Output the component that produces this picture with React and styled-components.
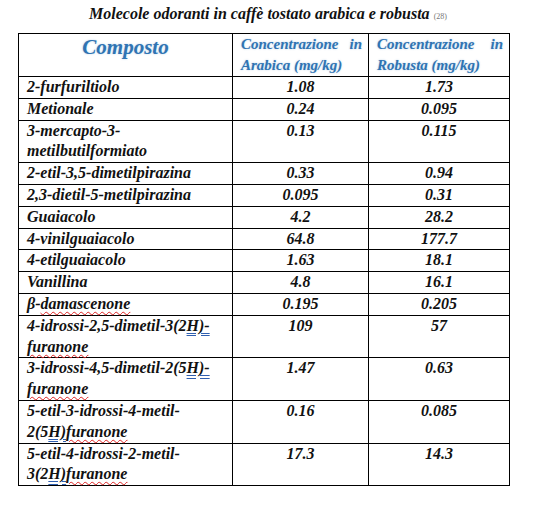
import React from "react"
import styled, { createGlobalStyle } from "styled-components"

const GlobalStyle = createGlobalStyle`
  body {
    margin: 0;
    background: #fff;
    font-family: "Liberation Serif", "Times New Roman", serif;
  }
`

const Page = styled.div`
  width: 536px;
  height: 510px;
  padding-top: 4px;
  box-sizing: border-box;
`

const Title = styled.h1`
  margin: 0 0 10px;
  height: 19px;
  text-align: center;
  font-family: "Liberation Serif", "Times New Roman", serif;
  font-size: 16px;
  line-height: 19px;
  font-weight: bold;
  font-style: italic;
  color: #111;
`

const Ref = styled.span`
  font-size: 8px;
  font-weight: normal;
  font-style: normal;
  color: #777;
  margin-left: 4px;
`

const Table = styled.table`
  margin-left: 18px;
  width: 491px;
  border-collapse: collapse;
  table-layout: fixed;
`

const HeadCell = styled.th`
  border: 1px solid #000;
  padding: ${props => (props.$main ? "0" : "0 6px 0 8px")};
  vertical-align: top;
  text-align: ${props => (props.$main ? "center" : "justify")};
  text-align-last: ${props => (props.$main ? "center" : "left")};
  color: #2f74b3;
  text-shadow: 0 0 2px rgba(47, 116, 179, 0.35);
  font-family: "Liberation Serif", "Times New Roman", serif;
  font-style: italic;
  font-weight: bold;
  font-size: ${props => (props.$main ? "21px" : "15px")};
  line-height: ${props => (props.$main ? "26px" : "21px")};
  height: 42px;
`

const Cell = styled.td`
  border: 1px solid #000;
  padding: ${props => (props.$num ? "0" : "0 4px 0 8px")};
  vertical-align: top;
  text-align: ${props => (props.$num ? "center" : "left")};
  font-family: "Liberation Serif", "Times New Roman", serif;
  font-style: italic;
  font-weight: bold;
  font-size: 16px;
  line-height: 20.8px;
  color: #111;
`

const Spell = styled.span`
  text-decoration: underline wavy #d22;
  text-decoration-thickness: 1px;
  text-underline-offset: 2px;
`

const Grammar = styled.span`
  text-decoration: underline double #2f5fb0;
  text-underline-offset: 2px;
`

const rows = [
  ["2-furfuriltiolo", "1.08", "1.73"],
  ["Metionale", "0.24", "0.095"],
  [<>3-mercapto-3-<br />metilbutilformiato</>, "0.13", "0.115"],
  ["2-etil-3,5-dimetilpirazina", "0.33", "0.94"],
  ["2,3-dietil-5-metilpirazina", "0.095", "0.31"],
  ["Guaiacolo", "4.2", "28.2"],
  ["4-vinilguaiacolo", "64.8", "177.7"],
  ["4-etilguaiacolo", "1.63", "18.1"],
  ["Vanillina", "4.8", "16.1"],
  [<>β-<Spell>damascenone</Spell></>, "0.195", "0.205"],
  [
    <>4-idrossi-2,5-dimetil-3(2<Grammar>H)-</Grammar><br /><Spell>furanone</Spell></>,
    "109",
    "57",
  ],
  [
    <>3-idrossi-4,5-dimetil-2(5<Grammar>H)-</Grammar><br /><Spell>furanone</Spell></>,
    "1.47",
    "0.63",
  ],
  [
    <>5-etil-3-idrossi-4-metil-<br />2(5<Grammar>H)</Grammar><Spell>furanone</Spell></>,
    "0.16",
    "0.085",
  ],
  [
    <>5-etil-4-idrossi-2-metil-<br />3(2<Grammar>H)</Grammar><Spell>furanone</Spell></>,
    "17.3",
    "14.3",
  ],
]

export default function App() {
  return (
    <Page>
      <GlobalStyle />
      <Title>
        Molecole odoranti in caffè tostato arabica e robusta<Ref>(28)</Ref>
      </Title>
      <Table>
        <colgroup>
          <col style={{ width: 214 }} />
          <col style={{ width: 136 }} />
          <col style={{ width: 141 }} />
        </colgroup>
        <thead>
          <tr>
            <HeadCell $main>Composto</HeadCell>
            <HeadCell>Concentrazione in Arabica (mg/kg)</HeadCell>
            <HeadCell>Concentrazione in Robusta (mg/kg)</HeadCell>
          </tr>
        </thead>
        <tbody>
          {rows.map(([name, arabica, robusta], i) => (
            <tr key={i}>
              <Cell>{name}</Cell>
              <Cell $num>{arabica}</Cell>
              <Cell $num>{robusta}</Cell>
            </tr>
          ))}
        </tbody>
      </Table>
    </Page>
  )
}
